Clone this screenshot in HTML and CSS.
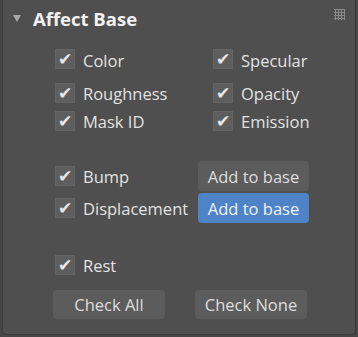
FILE: index.html
```html
<!DOCTYPE html>
<html lang="en">
<head>
    <meta charset="UTF-8">
    <title>Affect Base</title>
    <link rel="stylesheet" href="styles.css">
</head>
<body>
    <div class="panel">
        <div class="panel-header">
            <span class="caret"></span>
            <span class="title">Affect Base</span>
            <svg class="grip" width="11" height="11" viewBox="0 0 11 11">
                <g fill="#8a8a8a">
                    <rect x="0" y="0" width="11" height="1"/>
                    <rect x="0" y="3" width="11" height="1"/>
                    <rect x="0" y="6" width="11" height="1"/>
                    <rect x="0" y="9" width="11" height="1"/>
                    <rect x="1" y="0" width="1" height="11"/>
                    <rect x="4" y="0" width="1" height="11"/>
                    <rect x="7" y="0" width="1" height="11"/>
                    <rect x="10" y="0" width="1" height="11"/>
                </g>
            </svg>
        </div>

        <div class="channels">
            <label class="check first"><span class="box">✔</span>Color</label>
            <label class="check first"><span class="box">✔</span>Specular</label>
            <label class="check"><span class="box">✔</span>Roughness</label>
            <label class="check"><span class="box">✔</span>Opacity</label>
            <label class="check"><span class="box">✔</span>Mask ID</label>
            <label class="check"><span class="box">✔</span>Emission</label>
        </div>

        <div class="maps">
            <label class="check"><span class="box">✔</span>Bump</label>
            <button class="btn">Add to base</button>
            <label class="check"><span class="box">✔</span>Displacement</label>
            <button class="btn active">Add to base</button>
        </div>

        <div class="rest">
            <label class="check"><span class="box">✔</span>Rest</label>
        </div>

        <div class="actions">
            <button class="btn wide">Check All</button>
            <button class="btn wide">Check None</button>
        </div>
    </div>
</body>
</html>
```

FILE: styles.css
```css
body {
    margin: 0;
    background: #464646;
    font-family: 'Open Sans', 'Noto Sans', sans-serif;
    color: #e2e2e2;
    overflow: hidden;
}

.panel {
    margin: -6px 2px 0 2px;
    height: 341px;
    box-sizing: border-box;
    background: #4f4f4f;
    border: 1px solid #3b3b3b;
    border-radius: 5px;
}

.panel-header {
    display: flex;
    align-items: center;
    height: 36px;
    padding: 5px 0 0 10px;
    position: relative;
}

.caret {
    width: 0;
    height: 0;
    border-left: 4.5px solid transparent;
    border-right: 4.5px solid transparent;
    border-top: 7px solid #a9a9a9;
    margin-right: 12px;
    margin-top: 1px;
}

.title {
    font-size: 18.5px;
    font-weight: bold;
    color: #f2f2f2;
}

.grip {
    position: absolute;
    right: 10px;
    top: 14px;
}

.check {
    display: flex;
    align-items: center;
    font-size: 16.5px;
    height: 28px;
}

.box {
    width: 20px;
    height: 20px;
    box-sizing: border-box;
    background: #5e5e5e;
    border: 1px solid #646464;
    margin-right: 8px;
    flex-shrink: 0;
    font-family: 'DejaVu Sans', sans-serif;
    font-size: 17px;
    line-height: 19px;
    text-align: center;
    color: #e6e6e6;
    overflow: hidden;
}

.channels {
    display: grid;
    grid-template-columns: 158px 1fr;
    padding: 10px 0 0 52px;
}

.channels .first {
    height: 33px;
    align-items: flex-start;
    padding-top: 3px;
    box-sizing: border-box;
}

.maps {
    display: grid;
    grid-template-columns: 143px 111px;
    grid-auto-rows: 30px;
    row-gap: 2px;
    padding: 26px 0 0 52px;
    align-items: center;
}

.maps .check {
    height: 30px;
}

.btn {
    font-family: inherit;
    font-size: 16.5px;
    color: #dedede;
    background: #5c5c5c;
    border: none;
    border-radius: 4px;
    height: 30px;
    padding: 0;
}

.btn.active {
    background: #4f83c8;
    color: #eef2f8;
}

.rest {
    padding: 28px 0 0 52px;
}

.actions {
    display: flex;
    gap: 30px;
    padding: 11px 0 0 50px;
}

.btn.wide {
    width: 112px;
    height: 29px;
}
```
